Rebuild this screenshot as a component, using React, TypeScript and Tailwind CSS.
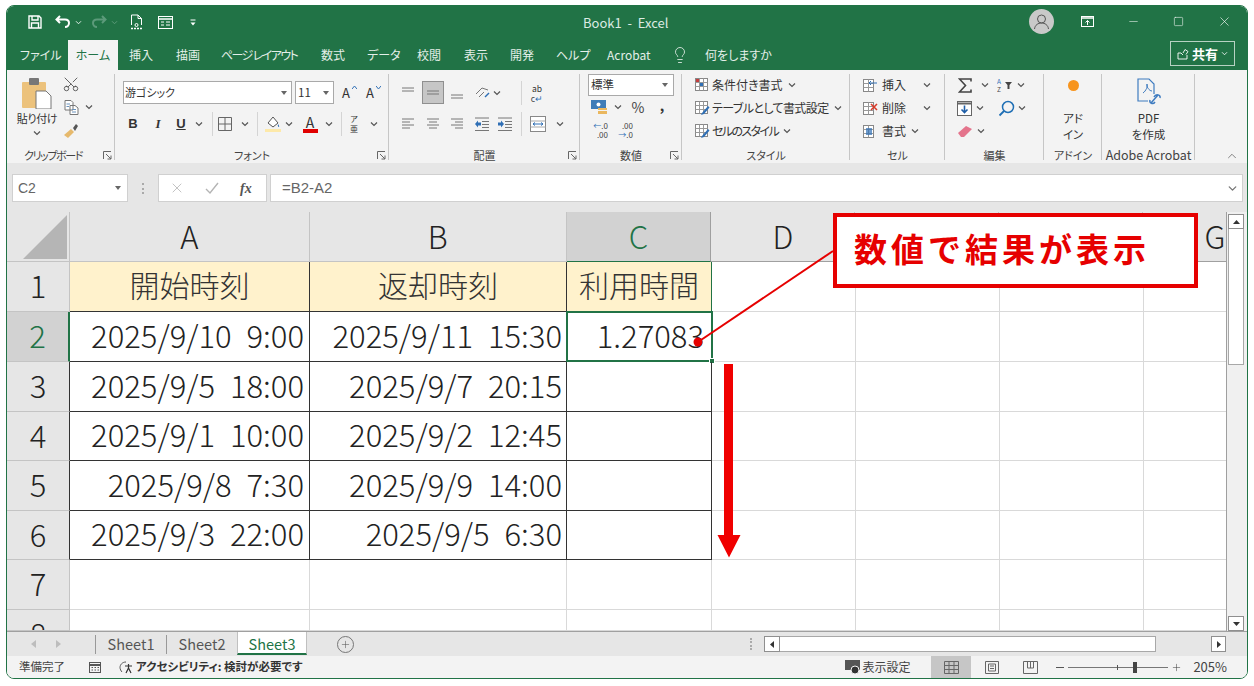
import React from 'react';
import { ChevronDown, ChevronUp, Lightbulb, Minus, Scissors, Square, X, Plus } from 'lucide-react';

const Chev = ({ className = '' }: { className?: string }) => (
  <svg width="8" height="6" viewBox="0 0 8 6" className={`shrink-0 ${className}`}>
    <path d="M1 1.5 L4 4.5 L7 1.5" fill="none" stroke="#555" strokeWidth="1.2" />
  </svg>
);

const Sep = ({ className = '' }: { className?: string }) => <div className={`w-px h-[24px] bg-[#d4d4d4] shrink-0 ${className}`} />;

const Launcher = () => (
  <svg width="9" height="9" viewBox="0 0 9 9" className="shrink-0">
    <path d="M0.5 8 V0.5 H8 M3 3 L8 8 M8 4.5 V8 H4.5" fill="none" stroke="#666" strokeWidth="1" />
  </svg>
);

const Lines = ({ kind, className = '' }: { kind: string; className?: string }) => {
  const rows: Record<string, string> = {
    top: 'M2 3H14M2 6H14',
    mid: 'M2 6H14M2 9H14',
    bottom: 'M2 10H14M2 13H14',
    left: 'M2 3H14M2 6H10M2 9H14M2 12H10',
    center: 'M2 3H14M4 6H12M2 9H14M4 12H12',
    right: 'M2 3H14M6 6H14M2 9H14M6 12H14',
  };
  return (
    <svg width="16" height="16" viewBox="0 0 16 16" className={`shrink-0 ${className}`}>
      <path d={rows[kind]} stroke="#777" strokeWidth="1" fill="none" />
    </svg>
  );
};

const Indent = ({ flip = false, className = '' }: { flip?: boolean; className?: string }) => (
  <svg width="16" height="16" viewBox="0 0 16 16" className={`shrink-0 ${className}`}>
    <path d="M1 2H15M8 5.5H15M8 8.5H15M8 11.5H15M1 14.5H15" stroke="#777" strokeWidth="1" fill="none" />
    <path d={flip ? 'M1 6.5H4V4.5L7 8L4 11.5V9.5H1Z' : 'M7 6.5H4V4.5L1 8L4 11.5V9.5H7Z'} fill="#2f6fb5" />
  </svg>
);

const StyleIcon = ({ cond = false }: { cond?: boolean }) => (
  <svg width="16" height="16" viewBox="0 0 16 16" className="shrink-0">
    <rect x="1.5" y="1.5" width="12" height="12" fill="#fff" stroke="#888" />
    <path d="M1.5 5.5H13.5M1.5 9.5H13.5M5.5 1.5V13.5M9.5 1.5V13.5" stroke="#999" />
    {cond ? (
      <>
        <rect x="2" y="2" width="3" height="3" fill="#c43e3e" />
        <rect x="6" y="6" width="3" height="3" fill="#2f6fb5" />
      </>
    ) : (
      <path d="M8 13 L14 6 L15.5 7.5 L10 14 L7 15Z" fill="#2f6fb5" />
    )}
  </svg>
);

const CellIcon = ({ kind }: { kind: string }) => (
  <svg width="17" height="17" viewBox="0 0 17 17" className="shrink-0">
    <rect x="2.5" y="2.5" width="10" height="12" fill="#fff" stroke="#888" />
    <path d="M2.5 6.5H12.5M2.5 10.5H12.5M7.5 2.5V14.5" stroke="#999" />
    {kind === 'ins' && <path d="M8 6H16M8 6L10 4M8 6L10 8" stroke="#2f6fb5" fill="none" />}
    {kind === 'del' && <path d="M10 4L16 10M16 4L10 10" stroke="#d83b2a" strokeWidth="1.6" />}
    {kind === 'fmt' && <rect x="5" y="5" width="6" height="7" fill="#2f6fb5" opacity="0.7" />}
  </svg>
);

const StatusIcon = () => (
  <svg width="14" height="14" viewBox="0 0 14 14" className="shrink-0">
    <rect x="1.5" y="2.5" width="11" height="10" fill="none" stroke="#555" />
    <path d="M1.5 5H12.5" stroke="#555" strokeWidth="2" />
    <path d="M3.5 7.5H5M6.5 7.5H8M9.5 7.5H11M3.5 10H5M6.5 10H8M9.5 10H11" stroke="#555" />
  </svg>
);

const tabs = [
  ['ファイル', 'ml-[13px] w-[34px]'],
  ['挿入', 'ml-[11px] w-[24px]'],
  ['描画', 'ml-[23px] w-[24px]'],
  ['ページ レイアウト', 'ml-[21px] w-[78px] tracking-[-1.6px]'],
  ['数式', 'ml-[22px] w-[24px]'],
  ['データ', 'ml-[22px] w-[29px]'],
  ['校閲', 'ml-[21px] w-[24px]'],
  ['表示', 'ml-[23px] w-[24px]'],
  ['開発', 'ml-[22px] w-[24px]'],
  ['ヘルプ', 'ml-[22px] w-[29px]'],
  ['Acrobat', 'ml-[22px] w-[45px]'],
];

const Group = ({ label, w, children, launcher = false, labelClass = 'text-[11px]' }: { label: string; w: string; children: React.ReactNode; launcher?: boolean; labelClass?: string }) => (
  <div className={`${w} h-full shrink-0 flex flex-col relative`}>
    <div className="h-[78px] shrink-0">{children}</div>
    <div className={`h-[14px] flex items-center justify-center text-[#444] whitespace-nowrap ${labelClass}`}>{label}</div>
    {launcher && (
      <div className="absolute right-[3px] bottom-[3px]">
        <Launcher />
      </div>
    )}
    <div className="absolute right-0 top-[4px] bottom-[3px] w-px bg-[#c6c6c6]" />
  </div>
);

const dates = [
  ['開始時刻', '返却時刻', '利用時間'],
  ['2025/9/10 9:00', '2025/9/11 15:30', '1.27083'],
  ['2025/9/5 18:00', '2025/9/7 20:15', ''],
  ['2025/9/1 10:00', '2025/9/2 12:45', ''],
  ['2025/9/8 7:30', '2025/9/9 14:00', ''],
  ['2025/9/3 22:00', '2025/9/5 6:30', ''],
];

const rowHeights = ['h-[50px]', 'h-[50px]', 'h-[50px]', 'h-[49px]', 'h-[50px]', 'h-[49px]', 'h-[50px]', 'h-[21px]'];

const headBorder = (r: number) => {
  if (r === 1) return 'bg-[#d2d2d2] text-[#217346] border-r-2 border-r-[#217346]';
  if (r >= 2 && r <= 5) return 'bg-[#e6e6e6] border-r border-r-[#333]';
  return 'bg-[#e6e6e6] border-r border-r-[#c4c4c4]';
};

const App = () => {
  return (
    <div className="w-[1254px] h-[686px] bg-white relative overflow-hidden pt-[5px] pl-[6px] font-['Noto_Sans_CJK_JP','Noto_Sans',sans-serif] [font-feature-settings:'palt']">
      <div className="w-[1242px] h-[674px] rounded-[8px] overflow-hidden border border-[#217346] flex flex-col">
        {/* title bar */}
        <div className="h-[34px] bg-[#217346] shrink-0 flex items-center text-white relative">
          <div className="flex items-center ml-[21px] mt-[-2px]">
            <svg width="14" height="14" viewBox="0 0 14 14">
              <path d="M1 1H11L13 3V13H1Z" fill="none" stroke="#fff" strokeWidth="1.4" />
              <path d="M4 1V5H10V1M3.5 13V8H10.5V13" fill="none" stroke="#fff" strokeWidth="1.4" />
            </svg>
            <svg width="16" height="14" viewBox="0 0 16 14" className="ml-[13px]">
              <path d="M5 1L1.5 4.5L5 8M2 4.5H10C12.5 4.5 14 6 14 8C14 10 12.5 12 10 12" fill="none" stroke="#fff" strokeWidth="2" />
            </svg>
            <svg width="7" height="5" viewBox="0 0 8 6" className="ml-[4px]"><path d="M1 1.5L4 4.5L7 1.5" fill="none" stroke="#dfeee6" strokeWidth="1.2" /></svg>
            <svg width="16" height="14" viewBox="0 0 16 14" className="ml-[9px]">
              <path d="M11 1L14.5 4.5L11 8M14 4.5H6C3.5 4.5 2 6 2 8C2 10 3.5 12 6 12" fill="none" stroke="#5c9a7a" strokeWidth="2" />
            </svg>
            <svg width="7" height="5" viewBox="0 0 8 6" className="ml-[4px]"><path d="M1 1.5L4 4.5L7 1.5" fill="none" stroke="#5c9a7a" strokeWidth="1.2" /></svg>
            <svg width="13" height="16" viewBox="0 0 13 16" className="ml-[12px]">
              <path d="M1.5 1H8L11.5 4.5V11M1.5 1V11M8 1V4.5H11.5" fill="none" stroke="#fff" />
              <path d="M1 14.5H12" stroke="#fff" strokeWidth="1.4" strokeDasharray="2 1" />
              <circle cx="6.5" cy="11" r="1.5" fill="none" stroke="#fff" />
            </svg>
            <svg width="15" height="13" viewBox="0 0 15 13" className="ml-[15px]">
              <rect x="0.5" y="0.5" width="14" height="12" fill="none" stroke="#fff" />
              <path d="M0.5 3H14.5" stroke="#fff" strokeWidth="1.5" />
              <path d="M3 6H6M3 9H6M8 6H12M8 9H12" stroke="#fff" />
            </svg>
            <svg width="6" height="7" viewBox="0 0 6 7" className="ml-[17px]">
              <path d="M0.5 1H5.5" stroke="#fff" />
              <path d="M0.5 3.5H5.5L3 6.5Z" fill="#fff" />
            </svg>
          </div>
          <div className="absolute left-[576px] top-[8px] text-[13px] leading-[18px] text-[#dcebe3] whitespace-pre">Book1  -  Excel</div>
          <div className="ml-auto flex items-center mt-[-3px]">
            <div className="w-[25px] h-[25px] rounded-full bg-[#c9c9c9] flex items-center justify-center">
              <svg width="17" height="17" viewBox="0 0 17 17">
                <circle cx="8.5" cy="6" r="4" fill="none" stroke="#555" />
                <path d="M1.5 16C2 12 5 10 8.5 10C12 10 15 12 15.5 16" fill="none" stroke="#555" />
              </svg>
            </div>
            <svg width="13" height="12" viewBox="0 0 13 12" className="ml-[27px]">
              <rect x="0.5" y="0.5" width="12" height="10" fill="none" stroke="#fff" />
              <path d="M0.5 2H12.5" stroke="#fff" strokeWidth="1.5" />
              <path d="M6.5 9V4.5M4.5 6.5L6.5 4.5L8.5 6.5" fill="none" stroke="#fff" />
            </svg>
            <Minus size={13} strokeWidth={1} className="ml-[33px] text-white" />
            <Square size={11} strokeWidth={1.2} className="ml-[33px] text-white" />
            <X size={15} strokeWidth={1} className="ml-[33px] mr-[15px] text-white" />
          </div>
        </div>
        {/* tabs */}
        <div className="h-[30px] bg-[#217346] shrink-0 flex items-center text-[12px] text-[#e4efe9] whitespace-nowrap relative">
          {tabs.slice(0, 1).map(([t, c]) => (
            <div key={t} className={c}>{t}</div>
          ))}
          <div className="ml-[14px] w-[50px] h-[30px] bg-[#f3f3f3] text-[#217346] flex items-center justify-center">ホーム</div>
          {tabs.slice(1).map(([t, c]) => (
            <div key={t} className={c}>{t}</div>
          ))}
          <Lightbulb size={18} strokeWidth={1} className="ml-[19px] text-white" />
          <div className="ml-[16px]">何をしますか</div>
          <div className="ml-auto mr-[12px] mt-[-3px] w-[65px] h-[25px] border border-[#b7d2c3] flex items-center justify-center gap-[3px] text-white">
            <svg width="12" height="12" viewBox="0 0 12 12"><path d="M1 5V11H10V7M1 5H4L6 7M6 5L8 1.5L11 3.5L9 6.5" fill="none" stroke="#fff" strokeWidth="0.9" /></svg>
            <span className="font-bold text-[13px]">共有</span>
            <svg width="7" height="5" viewBox="0 0 8 6"><path d="M1 1.5L4 4.5L7 1.5" fill="none" stroke="#fff" /></svg>
          </div>
        </div>
        {/* ribbon */}
        <div className="h-[93px] bg-[#f3f3f3] shrink-0 flex text-[12px] text-[#333]">
          <Group label="クリップボード" w="w-[108px]" launcher labelClass="text-[11px] tracking-[-1.4px] pr-[16px]">
            <div className="flex">
              <div className="w-[56px] flex flex-col items-center pl-[4px] pt-[8px]">
                <svg width="30" height="31" viewBox="0 0 30 31">
                  <rect x="0" y="4" width="24" height="26" rx="1" fill="#ecc27c" />
                  <rect x="7" y="0" width="10" height="7" rx="1" fill="#777" />
                  <path d="M14 13H24L29 18V31H14Z" fill="#fff" stroke="#777" />
                </svg>
                <div className="text-[11px] mt-[2px] leading-[14px] whitespace-nowrap tracking-[-0.4px]">貼り付け</div>
                <Chev className="mt-[5px]" />
              </div>
              <div className="flex flex-col items-center w-[20px] ml-[-2px] pt-[5px] gap-[6px]">
                <Scissors size={18} strokeWidth={1.2} className="text-[#555] rotate-[-90deg]" />
                <svg width="17" height="17" viewBox="0 0 17 17">
                  <path d="M2 1.5H8L10 3.5V11H2ZM7 6.5H12L15 9V15.5H7Z" fill="#fff" stroke="#777" />
                  <path d="M3.5 5H7M3.5 7.5H6M9 10.5H13M9 13H13" stroke="#6a93bd" />
                </svg>
                <svg width="17" height="17" viewBox="0 0 17 17">
                  <path d="M1 13L8 7L11 10L5 16Z" fill="#e6b96c" />
                  <path d="M10 6L13 2L15 4L12 9Z" fill="#555" />
                </svg>
              </div>
              <Chev className="ml-[4px] mt-[34px]" />
            </div>
          </Group>
          <Group label="フォント" w="w-[274px]" launcher>
            <div className="pt-[11px] flex items-center ml-[8px]">
              <div className="w-[169px] h-[23px] bg-white border border-[#a9a9a9] flex items-center justify-between pl-[1px] pr-[2px] text-[11px]">
                <span>游ゴシック</span>
                <svg width="6" height="4" viewBox="0 0 6 4" className="mr-[2px]"><path d="M0 0H6L3 4Z" fill="#666" /></svg>
              </div>
              <div className="ml-[3px] w-[39px] h-[23px] bg-white border border-[#a9a9a9] flex items-center justify-between pl-[2px] pr-[4px] text-[11.5px]">
                <span>11</span>
                <svg width="6" height="4" viewBox="0 0 6 4"><path d="M0 0H6L3 4Z" fill="#666" /></svg>
              </div>
              <div className="ml-[8px] text-[13px] w-[12px] leading-none relative">A
                <svg width="5" height="3" viewBox="0 0 5 3" className="absolute top-0 left-[10px]"><path d="M0 3L2.5 0L5 3" fill="none" stroke="#2f6fb5" /></svg>
              </div>
              <div className="ml-[12px] text-[13px] w-[12px] leading-none relative">A
                <svg width="5" height="3" viewBox="0 0 5 3" className="absolute top-0 left-[10px]"><path d="M0 0L2.5 3L5 0" fill="none" stroke="#2f6fb5" /></svg>
              </div>
            </div>
            <div className="mt-[9px] h-[22px] flex items-center text-[13px]">
              <span className="ml-[12px] w-[12px] text-center font-bold font-['Liberation_Sans',sans-serif]">B</span>
              <span className="ml-[13px] w-[12px] text-center font-bold italic font-['Liberation_Serif',serif]">I</span>
              <span className="ml-[11px] w-[12px] text-center font-bold underline font-['Liberation_Sans',sans-serif]">U</span>
              <Chev className="ml-[8px]" />
              <Sep className="ml-[9px]" />
              <svg width="14" height="14" viewBox="0 0 14 14" className="ml-[5px]"><path d="M0.5 0.5H13.5V13.5H0.5ZM7 0.5V13.5M0.5 7H13.5" fill="none" stroke="#666" /></svg>
              <Chev className="ml-[9px]" />
              <Sep className="ml-[8px]" />
              <svg width="16" height="18" viewBox="0 0 16 18" className="ml-[7px]">
                <path d="M3 8L8 2L13 8L8 12Z" fill="#fff" stroke="#555" />
                <path d="M13 9C14 10.5 14.5 11 14 12C13 12 12.5 11 13 9Z" fill="#2f6fb5" />
                <rect x="0" y="14" width="16" height="3" fill="#fde9a9" />
              </svg>
              <Chev className="ml-[4px]" />
              <div className="ml-[10px] w-[14px] flex flex-col items-center leading-none">
                <span className="text-[14px] leading-[14px]">A</span>
                <div className="w-[15px] h-[4px] bg-[#e00000]" />
              </div>
              <Chev className="ml-[8px]" />
              <Sep className="ml-[8px]" />
              <span className="ml-[6px] w-[12px] text-[8px] leading-[10px] text-center">ア<br />亜</span>
              <Chev className="ml-[10px]" />
            </div>
          </Group>
          <Group label="配置" w="w-[191px]" launcher>
            <div className="pt-[11px] h-[34px] flex items-center">
              <Lines kind="top" className="ml-[11px]" />
              <div className="ml-[6px] w-[22px] h-[23px] bg-[#c6c6c6] border border-[#8f8f8f] flex items-center justify-center"><Lines kind="mid" /></div>
              <Lines kind="bottom" className="ml-[5px]" />
              <svg width="16" height="16" viewBox="0 0 16 16" className="ml-[9px]">
                <path d="M2 9L8 3L14 5M5 12L10 7" stroke="#777" fill="none" />
                <path d="M11 12L15 8" stroke="#2f6fb5" strokeWidth="1.4" />
              </svg>
              <Chev className="ml-[3px]" />
              <Sep className="ml-[20px]" />
              <div className="ml-[8px] w-[14px] text-[8.5px] leading-[10px] text-center">ab<br /><span className="text-[#444]">c<span className="text-[#2f6fb5]">↵</span></span></div>
            </div>
            <div className="mt-[9px] h-[22px] flex items-center">
              <Lines kind="left" className="ml-[11px]" />
              <Lines kind="center" className="ml-[9px]" />
              <Lines kind="right" className="ml-[8px]" />
              <Indent className="ml-[9px]" />
              <Indent flip className="ml-[7px]" />
              <Sep className="ml-[8px]" />
              <svg width="16" height="16" viewBox="0 0 16 16" className="ml-[8px]">
                <rect x="0.5" y="0.5" width="15" height="15" fill="#fff" stroke="#888" />
                <path d="M0.5 5H15.5M0.5 11H15.5" stroke="#aaa" />
                <path d="M3 8H13M3 8L5 6.5M3 8L5 9.5M13 8L11 6.5M13 8L11 9.5" stroke="#2f6fb5" />
              </svg>
              <Chev className="ml-[10px]" />
            </div>
          </Group>
          <Group label="数値" w="w-[102px]" launcher>
            <div className="pt-[4px] pl-[8px]">
              <div className="w-[86px] h-[22px] bg-white border border-[#a9a9a9] flex items-center justify-between pl-[2px] pr-[5px] text-[11.5px]">
                <span>標準</span>
                <svg width="6" height="4" viewBox="0 0 6 4"><path d="M0 0H6L3 4Z" fill="#666" /></svg>
              </div>
            </div>
            <div className="h-[22px] flex items-center">
              <svg width="16" height="16" viewBox="0 0 16 16" className="ml-[11px]">
                <rect x="0" y="1" width="15" height="9" fill="#3e7cb8" />
                <circle cx="7.5" cy="5.5" r="2" fill="#fff" />
                <rect x="7" y="9" width="9" height="2" fill="#eab75e" />
                <rect x="7" y="12" width="9" height="3" fill="#eab75e" />
              </svg>
              <Chev className="ml-[7px]" />
              <span className="ml-[8px] w-[16px] text-center text-[14px] leading-none text-[#444]">%</span>
              <span className="ml-[13px] w-[6px] text-center text-[14px] font-bold leading-none mt-[-4px]">,</span>
            </div>
            <div className="mt-[1px] h-[22px] flex items-center text-[8px] leading-[9px] text-[#444]">
              <div className="ml-[12px] w-[16px] text-right"><span className="text-[#2f6fb5]">←</span>.0<br />.00</div>
              <div className="ml-[9px] w-[16px] text-right">.00<br /><span className="text-[#2f6fb5]">→</span>.0</div>
            </div>
          </Group>
          <Group label="スタイル" w="w-[168px]">
            <div className="pt-[4px] pl-[12px] flex flex-col gap-[1px] text-[12px] whitespace-nowrap">
              <div className="h-[22px] flex items-center gap-[2px]"><StyleIcon cond />条件付き書式<Chev className="ml-[3px]" /></div>
              <div className="h-[22px] flex items-center gap-[2px]"><StyleIcon /><span className="tracking-[-0.6px]">テーブルとして書式設定</span><Chev className="ml-[3px]" /></div>
              <div className="h-[22px] flex items-center gap-[2px]"><StyleIcon /><span className="tracking-[-1.6px]">セルのスタイル</span><Chev className="ml-[3px]" /></div>
            </div>
          </Group>
          <Group label="セル" w="w-[95px]">
            <div className="pt-[4px] pl-[11px] flex flex-col gap-[1px] whitespace-nowrap">
              <div className="h-[22px] flex items-center gap-[4px]"><CellIcon kind="ins" />挿入<Chev className="ml-[13px]" /></div>
              <div className="h-[22px] flex items-center gap-[4px]"><CellIcon kind="del" />削除<Chev className="ml-[13px]" /></div>
              <div className="h-[22px] flex items-center gap-[4px]"><CellIcon kind="fmt" />書式<Chev className="ml-[1px]" /></div>
            </div>
          </Group>
          <Group label="編集" w="w-[99px]">
            <div className="pt-[4px] flex flex-col gap-[1px]">
              <div className="h-[22px] flex items-center">
                <svg width="14" height="15" viewBox="0 0 14 15" className="ml-[13px]">
                  <path d="M13 3.5V1H1.5L7.5 7.5L1.5 14H13V11.5" fill="none" stroke="#444" strokeWidth="1.6" />
                </svg>
                <Chev className="ml-[9px]" />
                <svg width="20" height="18" viewBox="0 0 20 18" className="ml-[8px]">
                  <text x="0" y="8" fontSize="6.5" fill="#2f6fb5">A</text>
                  <text x="0" y="16" fontSize="6.5" fill="#444">Z</text>
                  <path d="M8 6H15L12.5 9V13H10.5V9Z" fill="#444" />
                </svg>
                <Chev className="ml-[0px]" />
              </div>
              <div className="h-[22px] flex items-center">
                <svg width="15" height="15" viewBox="0 0 15 15" className="ml-[12px]">
                  <rect x="0.5" y="0.5" width="14" height="14" fill="#fff" stroke="#666" />
                  <path d="M0.5 2.5H14.5" stroke="#666" strokeWidth="2" />
                  <path d="M7.5 4.5V11M4.5 8.5L7.5 11.5L10.5 8.5" fill="none" stroke="#1f5fa8" strokeWidth="1.6" />
                </svg>
                <Chev className="ml-[4px]" />
                <svg width="17" height="17" viewBox="0 0 17 17" className="ml-[14px]">
                  <circle cx="10" cy="7" r="5.5" fill="none" stroke="#1f6fb5" strokeWidth="1.5" />
                  <path d="M6 11L1.5 15.5" stroke="#1f6fb5" strokeWidth="1.8" />
                </svg>
                <Chev className="ml-[3px]" />
              </div>
              <div className="h-[22px] flex items-center">
                <svg width="15" height="13" viewBox="0 0 15 13" className="ml-[13px]">
                  <path d="M0 8L8 1L14 4L6 12H3Z" fill="#e4748c" />
                </svg>
                <Chev className="ml-[4px]" />
              </div>
            </div>
          </Group>
          <Group label="アドイン" w="w-[58px]">
            <div className="flex flex-col items-center pt-[10px]">
              <div className="w-[11px] h-[11px] rounded-full bg-[#f7941d] blur-[0.5px]" />
              <div className="mt-[19px] text-[11.5px] leading-[16px] text-center">アド<br />イン</div>
            </div>
          </Group>
          <Group label="Adobe Acrobat" w="w-[93px]" labelClass="text-[12.5px]">
            <div className="flex flex-col items-center pt-[8px]">
              <svg width="26" height="28" viewBox="0 0 26 28">
                <path d="M18 16V6L13 1H2V23H12" fill="none" stroke="#3f7cc0" strokeWidth="1.2" />
                <path d="M7 15C10 13 12 8 11 6C10 8 13 13 16 13" fill="none" stroke="#3f7cc0" />
                <path d="M15 25L22 17M14 22C13 25 17 27 19 24M18 19C20 15 25 17 24 20" fill="none" stroke="#3f7cc0" strokeWidth="1.5" />
              </svg>
              <div className="mt-[4px] text-[11.5px] leading-[16px] text-center whitespace-nowrap">PDF<br />を作成</div>
            </div>
          </Group>
          <div className="flex-1 flex items-end justify-end pr-[8px]">
            <ChevronUp size={14} strokeWidth={1.2} className="text-[#555]" />
          </div>
        </div>
        {/* formula bar */}
        <div className="h-[45px] bg-[#e6e6e6] shrink-0 flex items-start pt-[11px] text-[14px] text-[#666] font-['Liberation_Sans',sans-serif]">
          <div className="ml-[5px] w-[116px] h-[28px] bg-white border border-[#d0d0d0] flex items-center justify-between pl-[5px] pr-[6px]">
            <span>C2</span>
            <svg width="6" height="4" viewBox="0 0 6 4"><path d="M0 0H6L3 4Z" fill="#666" /></svg>
          </div>
          <div className="w-[30px] h-[28px] flex items-center justify-center">
            <div className="w-[2px] h-[11px] border-l-2 border-dotted border-[#aaa]" />
          </div>
          <div className="w-[109px] h-[28px] bg-white border border-[#d0d0d0] flex items-center text-[#aaa]">
            <X size={16} strokeWidth={1.2} className="ml-[10px] text-[#b4b4b4]" />
            <svg width="16" height="14" viewBox="0 0 16 14" className="ml-[19px]"><path d="M2 8L6 12L14 2" fill="none" stroke="#b4b4b4" strokeWidth="1.4" /></svg>
            <span className="ml-[20px] text-[14px] italic font-bold text-[#555] font-['Liberation_Serif',serif]">fx</span>
          </div>
          <div className="ml-[3px] w-[973px] h-[28px] bg-white border border-[#d0d0d0] flex items-center justify-between pl-[11px] pr-[3px] text-[15px]">
            <span>=B2-A2</span>
            <ChevronDown size={13} strokeWidth={2.5} className="text-[#777]" />
          </div>
        </div>
        <div className="h-[4px] bg-[#e6e6e6] shrink-0" />
        {/* sheet */}
        <div className="h-[419px] shrink-0 flex">
          <div className="w-[1220px] h-[419px] overflow-hidden border-r border-[#9f9f9f] text-[#222] text-[31px] leading-none font-light">
            <div className="flex h-[50px]">
              <div className="w-[63px] h-[50px] bg-[#e6e6e6] border-r border-b border-[#c4c4c4] flex items-center justify-end pr-[2px]">
                <svg width="44" height="44" viewBox="0 0 44 44"><path d="M44 0V44H0Z" fill="#b5b5b5" /></svg>
              </div>
              {[
                ['A', 'w-[240px]'],
                ['B', 'w-[257px]'],
              ].map(([c, w]) => (
                <div key={c} className={`${w} h-[50px] pb-[3px] bg-[#e6e6e6] border-r border-b border-[#c4c4c4] flex items-center justify-center`}>{c}</div>
              ))}
              <div className="w-[145px] h-[50px] pb-[3px] bg-[#d2d2d2] border-r border-r-[#9f9f9f] border-b border-b-[#217346] text-[#217346] flex items-center justify-center">C</div>
              {['D', 'E', 'F'].map((c) => (
                <div key={c} className="w-[144px] h-[50px] pb-[3px] bg-[#e6e6e6] border-r border-r-[#c4c4c4] border-b border-b-[#a0a0a0] flex items-center justify-center">{c === 'D' ? c : ''}</div>
              ))}
              <div className="w-[83px] h-[50px] bg-[#e6e6e6] border-b border-[#a0a0a0] overflow-hidden">
                <div className="w-[144px] h-[46px] flex items-center justify-center">G</div>
              </div>
            </div>
            {rowHeights.map((h, r) => {
              const row = dates[r];
              return (
                <div key={r} className={`flex ${h}`}>
                  <div className={`w-[63px] ${h} shrink-0 overflow-hidden border-b border-b-[#c4c4c4] ${headBorder(r)}`}>
                    <div className="h-[44px] flex items-center justify-center">{r + 1}</div>
                  </div>
                  {row ? (
                    <>
                      <div className={`w-[240px] ${h} pb-[5px] shrink-0 border-r border-b border-[#333] flex items-center ${r === 0 ? 'bg-[#fff2cc] justify-center text-[#333] text-[30px]' : 'justify-end pr-[5px] [word-spacing:8px]'}`}>
                        {row[0]}
                      </div>
                      <div className={`w-[257px] ${h} pb-[5px] shrink-0 border-r border-b border-[#333] flex items-center ${r === 0 ? 'bg-[#fff2cc] justify-center text-[#333] text-[30px]' : 'justify-end pr-[4px] [word-spacing:8px]'}`}>
                        {row[1]}
                      </div>
                      <div className={`w-[145px] ${h} pb-[5px] shrink-0 border-b border-b-[#333] border-r flex items-center relative ${r === 0 ? 'bg-[#fff2cc] justify-center text-[#333] text-[30px] border-r-[#217346]' : 'justify-end pr-[7px] border-r-[#333]'}`}>
                        {row[2]}
                        {r === 1 && (
                          <div className="absolute left-[-1px] top-[-1px] right-[-2px] bottom-[-1px] border-2 border-[#217346]">
                            <div className="absolute right-[-4px] bottom-[-4px] w-[6px] h-[6px] bg-[#217346] border border-white" />
                          </div>
                        )}
                      </div>
                    </>
                  ) : (
                    <>
                      <div className={`w-[240px] ${h} shrink-0 border-r border-b border-[#d9d9d9]`} />
                      <div className={`w-[257px] ${h} shrink-0 border-r border-b border-[#d9d9d9]`} />
                      <div className={`w-[145px] ${h} shrink-0 border-r border-b border-[#d9d9d9]`} />
                    </>
                  )}
                  <div className={`w-[144px] ${h} shrink-0 border-r border-b border-[#d9d9d9]`} />
                  <div className={`w-[144px] ${h} shrink-0 border-r border-b border-[#d9d9d9]`} />
                  <div className={`w-[144px] ${h} shrink-0 border-r border-b border-[#d9d9d9]`} />
                  <div className={`w-[83px] ${h} shrink-0 border-b border-[#d9d9d9]`} />
                </div>
              );
            })}
          </div>
          {/* vertical scrollbar */}
          <div className="w-[20px] h-[419px] bg-[#f0f0f0] flex flex-col items-center pt-[2px] pr-[2px]">
            <div className="w-[16px] h-[15px] bg-white border border-[#8f8f8f] flex items-center justify-center">
              <svg width="7" height="4" viewBox="0 0 7 4"><path d="M0 4H7L3.5 0Z" fill="#333" /></svg>
            </div>
            <div className="w-[16px] h-[136px] bg-white border border-[#a8a8a8] border-t-0" />
            <div className="flex-1" />
            <div className="w-[16px] h-[15px] bg-white border border-[#8f8f8f] flex items-center justify-center">
              <svg width="7" height="4" viewBox="0 0 7 4"><path d="M0 0H7L3.5 4Z" fill="#333" /></svg>
            </div>
          </div>
        </div>
        {/* sheet tabs */}
        <div className="h-[25px] shrink-0 bg-[#e6e6e6] border-t border-[#a0a0a0] flex items-center text-[14.5px] text-[#555] relative">
          <svg width="5" height="8" viewBox="0 0 5 8" className="ml-[24px]"><path d="M5 0V8L0 4Z" fill="#bdbdbd" /></svg>
          <svg width="5" height="8" viewBox="0 0 5 8" className="ml-[20px]"><path d="M0 0V8L5 4Z" fill="#bdbdbd" /></svg>
          <div className="ml-[34px] w-px h-[19px] bg-[#999]" />
          <div className="w-[70px] text-center">Sheet1</div>
          <div className="w-px h-[19px] bg-[#999]" />
          <div className="w-[70px] text-center">Sheet2</div>
          <div className="w-[70px] h-[23px] self-start bg-white border-b-2 border-b-[#217346] border-x border-x-[#c0c0c0] text-[#217346] text-center leading-[23px]">Sheet3</div>
          <div className="ml-[30px] w-[17px] h-[17px] rounded-full border border-[#777] flex items-center justify-center">
            <Plus size={11} strokeWidth={1.2} className="text-[#555]" />
          </div>
          <div className="ml-[396px] w-[2px] h-[12px] border-l-2 border-dotted border-[#aaa]" />
          <div className="ml-[12px] w-[16px] h-[16px] bg-white border border-[#8f8f8f] flex items-center justify-center">
            <svg width="4" height="7" viewBox="0 0 4 7"><path d="M4 0V7L0 3.5Z" fill="#333" /></svg>
          </div>
          <div className="w-[376px] h-[16px] bg-white border border-[#a8a8a8] border-l-0" />
          <div className="w-[55px]" />
          <div className="w-[15px] h-[16px] bg-white border border-[#8f8f8f] flex items-center justify-center">
            <svg width="4" height="7" viewBox="0 0 4 7"><path d="M0 0V7L4 3.5Z" fill="#333" /></svg>
          </div>
        </div>
        {/* status bar */}
        <div className="h-[22px] shrink-0 bg-[#f3f3f3] flex items-center text-[11.5px] text-[#444] whitespace-nowrap">
          <span className="ml-[12px] w-[48px]">準備完了</span>
          <div className="ml-[21px]"><StatusIcon /></div>
          <svg width="17" height="15" viewBox="0 0 17 15" className="ml-[16px]">
            <path d="M8 2C4 2 2 5 2 7.5C2 9 3 11 4 12" fill="none" stroke="#555" />
            <path d="M7 6H14M10.5 4V8M10.5 8L8 13M10.5 8L13 13" stroke="#333" strokeWidth="1.2" fill="none" />
          </svg>
          <span className="ml-[1px] font-bold text-[#333] text-[11.5px]">アクセシビリティ: 検討が必要です</span>
          <div className="ml-auto flex items-center h-[22px]">
            <svg width="16" height="15" viewBox="0 0 16 15">
              <rect x="0" y="0" width="15" height="10" fill="#555" />
              <circle cx="10" cy="10" r="4" fill="#333" stroke="#f3f3f3" />
            </svg>
            <span className="ml-[1px] w-[69px] text-[12px]">表示設定</span>
            <div className="w-[40px] h-[22px] bg-[#c6c6c6] flex items-center justify-center">
              <svg width="15" height="13" viewBox="0 0 15 13"><path d="M0.5 0.5H14.5V12.5H0.5ZM0.5 4.5H14.5M0.5 8.5H14.5M5 0.5V12.5M10 0.5V12.5" fill="none" stroke="#666" /></svg>
            </div>
            <svg width="14" height="13" viewBox="0 0 14 13" className="ml-[14px]"><path d="M0.5 0.5H13.5V12.5H0.5ZM3.5 3H10.5V10H3.5ZM5 5H9M5 7.5H9" fill="none" stroke="#666" /></svg>
            <svg width="15" height="13" viewBox="0 0 15 13" className="ml-[24px]"><path d="M0.5 0.5H14.5V12.5H0.5ZM4.5 0.5V7H10.5V0.5M7.5 0.5V7" fill="none" stroke="#666" /></svg>
            <div className="ml-[18px] w-[8px] h-px bg-[#555]" />
            <div className="ml-[4px] w-[100px] h-px bg-[#777] relative">
              <div className="absolute left-[49px] top-[-2px] w-px h-[5px] bg-[#555]" />
              <div className="absolute left-[65px] top-[-5px] w-[4px] h-[11px] bg-[#444]" />
            </div>
            <Plus size={11} strokeWidth={1.2} className="ml-[3px] text-[#444]" />
            <span className="ml-[11px] mr-[20px] text-[13px]">205%</span>
          </div>
        </div>
      </div>
      {/* callout on top of the sheet */}
      <div className="absolute left-[833px] top-[213px] w-[365px] h-[75px] bg-white border-4 border-[#e60000] flex items-center pl-[17px] pb-[3px] text-[33px] tracking-[4px] font-bold text-[#e60000] whitespace-nowrap [font-feature-settings:normal]">
        数値で結果が表示
      </div>
      <svg width="150" height="110" viewBox="0 0 150 110" className="absolute left-[690px] top-[245px]">
        <path d="M143 6 L8 97" stroke="#e60000" strokeWidth="2" fill="none" />
        <circle cx="8" cy="97" r="4.5" fill="#e60000" />
      </svg>
      <svg width="24" height="194" viewBox="0 0 24 194" className="absolute left-[717px] top-[364px]">
        <path d="M7 0H16V171H23.5L12 193.5L0.5 171H7Z" fill="#f00000" />
      </svg>
    </div>
  );
};

export default App;
